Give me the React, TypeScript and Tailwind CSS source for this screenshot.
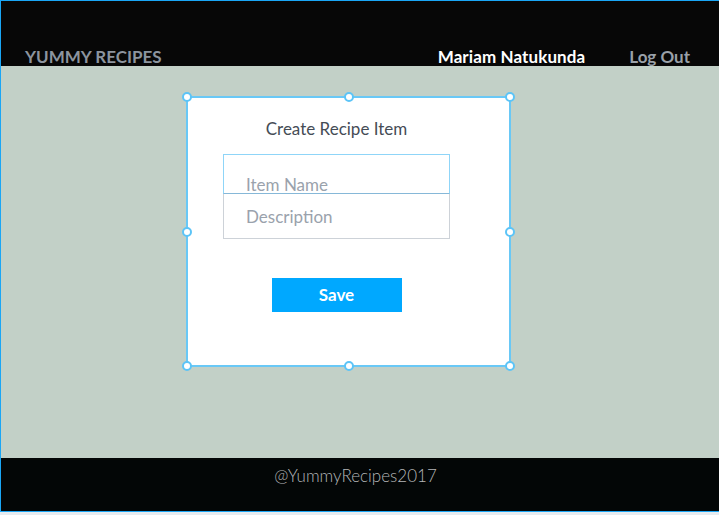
import React from "react";

const Handle = ({ cls }: { cls: string }) => (
  <div className={`absolute w-[10px] h-[10px] rounded-full bg-white border-2 border-[#5cc4f7] ${cls}`} />
);

export default function App() {
  return (
    <div className="w-[719px] h-[515px] bg-[#e6ebef]" style={{ fontFamily: "Lato, 'Open Sans', sans-serif" }}>
      <div className="h-[512px] flex flex-col border-t border-l border-b border-[#1aa6f5]">
        <header className="h-[65px] bg-[#070707] flex items-end pb-0 pl-[24px] pr-[29px]">
          <div className="text-[17px] font-bold text-[#8c949e] leading-[18px]">YUMMY RECIPES</div>
          <div className="ml-auto flex items-end">
            <div className="text-[17px] font-bold text-white leading-[18px] tracking-[0.1px]">Mariam Natukunda</div>
            <div className="ml-[44px] text-[17px] font-bold text-[#9aa1a9] leading-[18px]">Log Out</div>
          </div>
        </header>
        <main className="flex-1 bg-[#c2d0c7] pt-[30px] pl-[185px]">
          <div className="relative w-[325px] h-[271px] bg-white border-2 border-[#69c8f6] flex flex-col items-center pr-[24px]">
            <Handle cls="-left-[6px] -top-[6px]" />
            <Handle cls="left-[156px] -top-[6px]" />
            <Handle cls="-right-[6px] -top-[6px]" />
            <Handle cls="-left-[6px] top-[129px]" />
            <Handle cls="-right-[6px] top-[129px]" />
            <Handle cls="-left-[6px] -bottom-[6px]" />
            <Handle cls="left-[156px] -bottom-[6px]" />
            <Handle cls="-right-[6px] -bottom-[6px]" />
            <div className="mt-[20px] text-[17px] text-[#454c56] leading-[22px]">Create Recipe Item</div>
            <div className="mt-[14px] w-[227px] flex flex-col">
              <div className="h-[40px] border border-[#8fd5f8] border-b-[#86b8d8] flex items-end pl-[22px] pb-0">
                <span className="text-[17px] text-[#9aa2ac] leading-[16px]">Item Name</span>
              </div>
              <div className="h-[45px] border border-t-0 border-[#cdd2d8] flex items-start pl-[22px] pt-[13px]">
                <span className="text-[17px] text-[#9aa2ac] leading-[20px]">Description</span>
              </div>
            </div>
            <button className="mt-[39px] w-[130px] h-[34px] bg-[#00a8ff] text-white text-[17px] font-bold leading-[20px] flex items-center justify-center">
              Save
            </button>
          </div>
        </main>
        <footer className="h-[53px] bg-[#030606] flex justify-center pt-[7px] pr-[9px]">
          <span className="text-[17px] text-[#b4b6b8] leading-[22px]" style={{ fontWeight: 300 }}>@YummyRecipes2017</span>
        </footer>
      </div>
    </div>
  );
}
